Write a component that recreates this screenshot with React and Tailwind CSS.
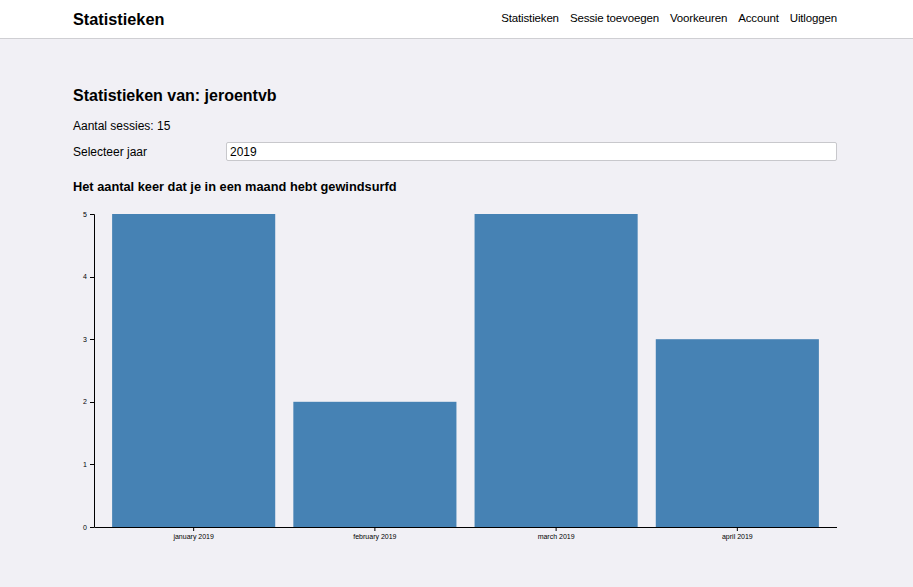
import React from "react";

const data = [
  { maand: "january 2019", aantal: 5 },
  { maand: "february 2019", aantal: 2 },
  { maand: "march 2019", aantal: 5 },
  { maand: "april 2019", aantal: 3 },
];

function Grafiek() {
  const breedte = 764;
  const hoogte = 340;
  const links = 21;
  const boven = 9;
  const onder = 322;
  const rechts = 764;
  const max = 5;
  const stap = (rechts - links) / (data.length - 0.1 + 0.2);
  const balk = stap * 0.9;
  const y = (v) => onder - ((onder - boven) * v) / max;

  return (
    <svg width={breedte} height={hoogte} className="block">
      {data.map((d, i) => {
        const x = links + stap * 0.1 + i * stap;
        return (
          <g key={d.maand}>
            <rect x={x} y={y(d.aantal)} width={balk} height={onder - y(d.aantal)} fill="#4682b4" />
            <line x1={x + balk / 2} x2={x + balk / 2} y1={onder} y2={onder + 4} stroke="#000" />
            <text x={x + balk / 2} y={onder + 12} fontSize="7" textAnchor="middle" fill="#000">
              {d.maand}
            </text>
          </g>
        );
      })}
      {/* y-as */}
      <path d={`M${links - 4},${boven}.5H${links}.5V${onder}.5H${rechts}`} fill="none" stroke="#000" strokeWidth="1" />
      {[0, 1, 2, 3, 4, 5].map((t) => (
        <g key={t}>
          <line x1={links - 4} x2={links} y1={Math.round(y(t)) + 0.5} y2={Math.round(y(t)) + 0.5} stroke="#000" />
          <text x={links - 7} y={y(t) + 2.5} fontSize="7" textAnchor="end" fill="#000">
            {t}
          </text>
        </g>
      ))}
    </svg>
  );
}

export default function App() {
  return (
    <div className="min-h-screen bg-[#f1f0f5] text-black font-['Liberation_Sans','Helvetica',sans-serif]">
      <nav className="bg-white h-[39px] border-b border-[#cfcfd3]">
        <div className="w-[764px] ml-[73px] h-full flex items-center justify-between">
          <span className="text-[16.3px] font-bold">Statistieken</span>
          <div className="flex gap-[11px] text-[11.5px] tracking-[-0.15px]">
            <a>Statistieken</a>
            <a>Sessie toevoegen</a>
            <a>Voorkeuren</a>
            <a>Account</a>
            <a>Uitloggen</a>
          </div>
        </div>
      </nav>

      <main className="w-[764px] ml-[73px] pt-[46px]">
        <h1 className="text-[16px] font-bold leading-[22px]">Statistieken van: jeroentvb</h1>
        <p className="text-[12px] mt-[12px] leading-[14px]">Aantal sessies: 15</p>
        <div className="flex items-center mt-[9px]">
          <label className="text-[12px] w-[153px]">Selecteer jaar</label>
          <input
            readOnly
            value="2019"
            className="flex-1 h-[19px] bg-white border border-[#c8c8cc] rounded-[2px] px-[3px] text-[12px] outline-none"
          />
        </div>
        <h2 className="text-[12.8px] font-bold mt-[18px] leading-[16px]">Het aantal keer dat je in een maand hebt gewindsurfd</h2>
        <div className="mt-[10px]">
          <Grafiek />
        </div>
      </main>
    </div>
  );
}
